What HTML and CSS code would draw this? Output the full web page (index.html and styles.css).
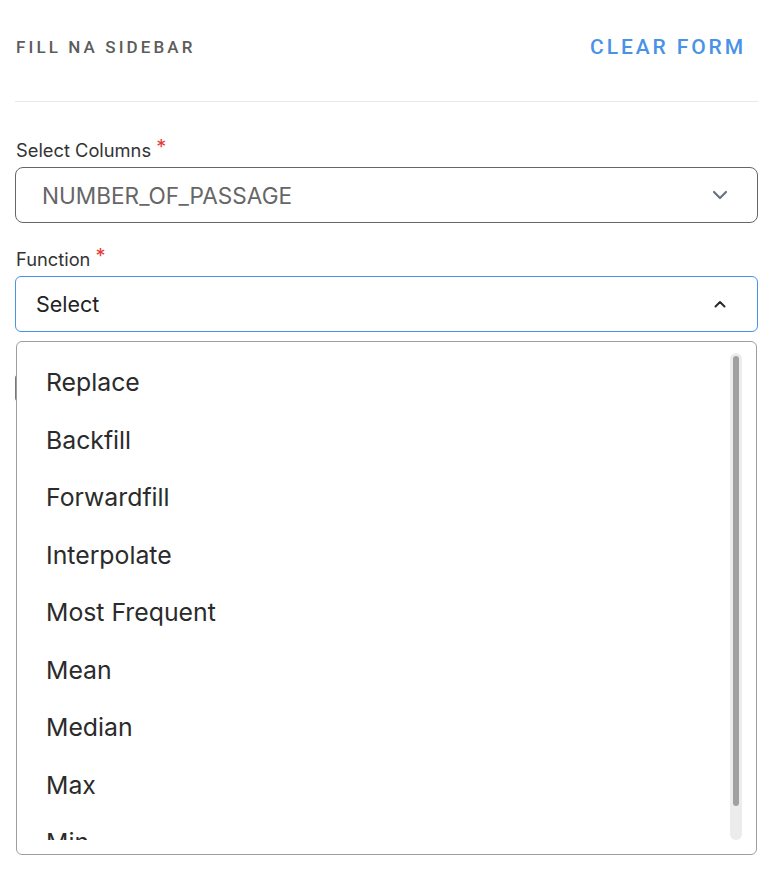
FILE: index.html
```html
<!DOCTYPE html>
<html lang="en">
<head>
  <meta charset="UTF-8">
  <meta name="viewport" content="width=device-width, initial-scale=1.0">
  <title>Fill NA Sidebar</title>
  <link rel="stylesheet" href="styles.css">
</head>
<body>
  <div class="sidebar">
    <header class="sidebar-head">
      <span class="sidebar-title">Fill NA Sidebar</span>
      <a class="clear-btn" href="#">Clear Form</a>
    </header>

    <div class="field first">
      <label class="field-label">Select Columns <span class="req">*</span></label>
      <div class="select">
        <span class="select-value muted">NUMBER_OF_PASSAGE</span>
        <svg class="chev" width="16" height="10" viewBox="0 0 16 10"><path d="M2 2l6 6 6-6" fill="none" stroke="#6b7280" stroke-width="2.2" stroke-linecap="round" stroke-linejoin="round"/></svg>
      </div>
    </div>

    <div class="field fn">
      <label class="field-label">Function <span class="req">*</span></label>
      <div class="select open">
        <span class="select-value">Select</span>
        <svg class="chev" width="16" height="10" viewBox="0 0 16 10"><path d="M3.5 7.5l4.5-4.5 4.5 4.5" fill="none" stroke="#2b2b2b" stroke-width="2" stroke-linecap="round" stroke-linejoin="round"/></svg>
      </div>

      <div class="menu">
        <ul class="menu-list">
          <li>Replace</li>
          <li>Backfill</li>
          <li>Forwardfill</li>
          <li>Interpolate</li>
          <li>Most Frequent</li>
          <li>Mean</li>
          <li>Median</li>
          <li>Max</li>
          <li>Min</li>
          <li>Zero</li>
        </ul>
        <div class="scroll-track"><div class="scroll-thumb"></div></div>
      </div>
    </div>
  </div>
</body>
</html>
```

FILE: styles.css
```css
body {
  margin: 0;
  padding: 0;
  background: #ffffff;
  font-family: Inter, "Liberation Sans", Arial, sans-serif;
  color: #333;
}
.sidebar { padding: 0 22px 0 15px; min-height: 886px; box-sizing: border-box; }

.sidebar-head {
  display: flex;
  justify-content: space-between;
  align-items: center;
  height: 102px;
  box-sizing: border-box;
  padding: 0 15px 8px 1px;
  border-bottom: 1px solid #e8e8e8;
  font-family: Roboto, "Liberation Sans", Arial, sans-serif;
}
.sidebar-title {
  font-size: 17px;
  font-weight: 500;
  letter-spacing: 3.1px;
  text-transform: uppercase;
  color: #5c5c5c;
}
.clear-btn {
  font-size: 21px;
  font-weight: 500;
  letter-spacing: 2.9px;
  margin-right: -3px;
  text-transform: uppercase;
  color: #4a92e6;
  text-decoration: none;
}

.field { position: relative; margin-top: 25px; }
.field.first { margin-top: 37px; }
.field-label {
  display: block;
  height: 22px;
  font-size: 18.3px;
  line-height: 22px;
  color: #333;
  padding-left: 1px;
  margin-bottom: 6px;
}
.req { color: #e53935; font-size: 20px; line-height: 0; vertical-align: 3px; }

.select {
  display: flex;
  align-items: center;
  justify-content: space-between;
  height: 56px;
  box-sizing: border-box;
  border: 1px solid #666;
  border-radius: 8px;
  padding: 0 29px 0 26px;
}
.select.open {
  border-color: #4a92e6;
  border-radius: 6px;
  padding-left: 20px;
}
.select-value { font-size: 21.5px; color: #222; }
.select-value.muted { font-size: 22.6px; color: #666; }

/* checkbox of the next row, mostly hidden under the open menu */
.field.fn::after {
  content: "";
  position: absolute;
  left: 0;
  top: 127px;
  width: 16px;
  height: 22px;
  border: 2px solid #777;
  border-radius: 3px;
  z-index: 0;
}

.menu {
  position: relative;
  z-index: 1;
  margin: 9px 1px 0;
  height: 514px;
  box-sizing: border-box;
  background: #fff;
  border: 1px solid #9e9e9e;
  border-radius: 6px;
  padding: 12px 0 14px;
}
.menu-list {
  list-style: none;
  margin: 0;
  padding: 0;
  height: 100%;
  overflow: hidden;
}
.menu-list li {
  height: 57.5px;
  line-height: 57.5px;
  padding-left: 29px;
  font-size: 24.8px;
  color: #2b2b2b;
}
.scroll-track {
  position: absolute;
  top: 11px;
  bottom: 14px;
  right: 14px;
  width: 12px;
  border-radius: 6px;
  background: #ececec;
}
.scroll-thumb {
  margin: 3px auto 0;
  width: 6px;
  height: 450px;
  border-radius: 3px;
  background: #a0a0a0;
}
```
